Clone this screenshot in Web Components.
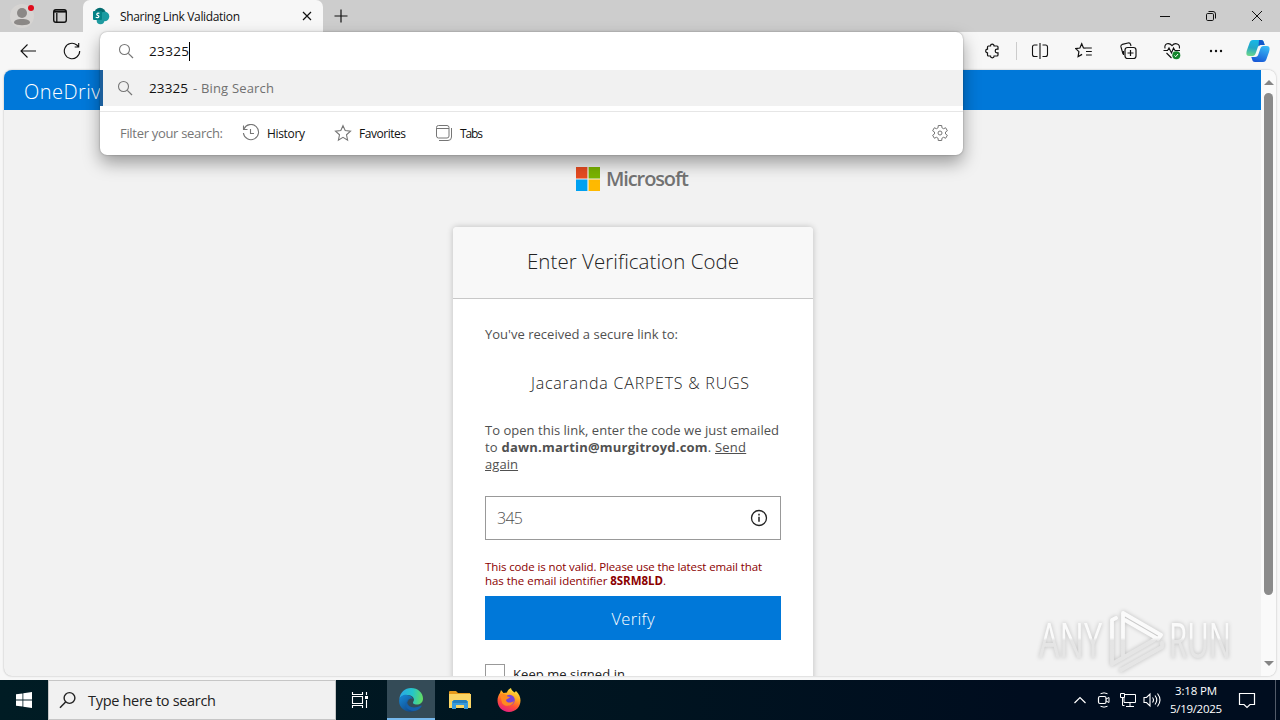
<!DOCTYPE html>
<html lang="en">
<head>
<meta charset="utf-8">
<title>Sharing Link Validation</title>
<style>
  html, body {
    margin: 0;
    width: 1280px;
    height: 720px;
    overflow: hidden;
    font-family: "Open Sans", "Noto Sans", sans-serif;
    font-size: 12px;
    color: #111;
  }
</style>
</head>
<body>
<desktop-screen></desktop-screen>

<script>
const makeTemplate = (html) => {
  const template = document.createElement('template')
  template.innerHTML = html
  return template
}

const define = (name, html) => {
  const template = makeTemplate(html)
  customElements.define(name, class extends HTMLElement {
    constructor() {
      super()
      this.attachShadow({ mode: 'open' })
      this.shadowRoot.appendChild(template.content.cloneNode(true))
    }
  })
}

// Outline of a six-toothed cog around (9, 9)
const cogPath = () => {
  const points = []
  for (let tooth = 0; tooth < 6; tooth += 1) {
    for (const [offset, radius] of [[-20, 5.6], [-13, 7.7], [13, 7.7], [20, 5.6]]) {
      const angle = (tooth * 60 - 90 + offset) * Math.PI / 180
      points.push(`${(9 + radius * Math.cos(angle)).toFixed(2)} ${(9 + radius * Math.sin(angle)).toFixed(2)}`)
    }
  }
  return `M${points.join('L')}Z`
}

// name: [width, height, markup]
const icons = {
  profile: [26, 26, '<circle cx="13" cy="13" r="12" fill="#d6d4d2" stroke="none"/><circle cx="13" cy="10" r="5" fill="#8b8886" stroke="none"/><path d="M5 20c0-3 3-4 8-4s8 1 8 4c-2 3-14 3-16 0Z" fill="#8b8886" stroke="none"/><circle cx="22" cy="5" r="3" fill="#e00b1c" stroke="none"/>'],
  workspaces: [16, 16, '<rect x="1.7" y="1.7" width="12.6" height="12.6" rx="2.2" stroke-width="1.4"/><path d="M2 3.6h12" stroke-width="2"/><path d="M4.8 5v9" stroke-width="1.3"/>'],
  sharepoint: [18, 18, '<g stroke="none"><circle cx="8" cy="6.5" r="5.8" fill="#036c70"/><circle cx="12.5" cy="9.5" r="4.8" fill="#1a9ba1"/><circle cx="8.5" cy="13.5" r="3.8" fill="#1f9aa0"/><rect x="1" y="4" width="9" height="9" rx="1" fill="#038387"/></g><path d="M7.4 6.4C5 5.4 3.8 7.7 5.7 8.4c2 .7 1.4 3-2 1.8" stroke="#fff" stroke-width="1.2"/>'],
  close: [12, 12, '<path d="m2 2 8 8M10 2l-8 8" stroke-width="1.2"/>'],
  plus: [14, 14, '<path d="M7 .5v13M.5 7h13" stroke-width="1.2"/>'],
  minimize: [12, 12, '<path d="M1 6.5h10"/>'],
  restore: [12, 12, '<rect x="1.5" y="3.5" width="7" height="7" rx="1.2"/><path d="M3.5 1.5H8a2.5 2.5 0 0 1 2.5 2.5v4.5"/>'],
  exit: [12, 12, '<path d="m1 1 10 10M11 1 1 11"/>'],
  back: [18, 18, '<path d="M17 9H2M8.500 2.500 2 9l6.500 6.500" stroke-width="1.1"/>'],
  refresh: [18, 18, '<path d="M16.700 9A7.700 7.700 0 1 1 13.800 3l1.700 1.700M15.700 1v4h-4" stroke-width="1.1"/>'],
  puzzle: [16, 16, '<path d="M4.500 3h2a1.800 1.800 0 0 1 3.600 0H13q1 0 1 1v2.200h-1a1.800 1.800 0 0 0 0 3.600h1V12q0 1-1 1h-2.900a1.800 1.800 0 0 1-3.600 0h-2q-1 0-1-1V9.800a1.800 1.800 0 0 1 0-3.600V4q0-1 1-1Z" stroke-width="1.2"/>'],
  split: [18, 18, '<path d="M9 1v16M6.500 3H3.500Q1.500 3 1.500 5v7.500q0 2 2 2h3M11.500 3h3q2 0 2 2v7.500q0 2-2 2h-3" stroke-width="1.1"/>'],
  favlist: [18, 18, '<path d="m10.500 6.200-2-.3L6.700 1.800 4.900 6 .8 6.600l3.100 3-.8 5 4-2.200M6.700 1.800 8.500 5.900M10 6h6.800M11 9.500h5.800M11 13h5.800" stroke-width="1.2"/>'],
  collections: [18, 18, '<path d="M4 12 2 5Q1.500 3 3.300 2.400L9 1q2-.5 2.600 1.500L12 4M4.500 13V9" stroke-width="1.1"/><rect x="6" y="5.500" width="11" height="11" rx="2.500" stroke-width="1.2"/><path d="M11.500 8v6M8.500 11h6" stroke-width="1.2"/>'],
  heart: [18, 18, '<path d="M2 6.500C1 1.500 6 0 9 3.700c3-3.700 8.500-2 7.300 2.800M.5 8.500h4L6 6l2.500 5 2-5 1.500 2.500h5M3.500 11l5 5" stroke-width="1.100"/><circle cx="13.300" cy="13.300" r="4" fill="#14852c" stroke="none"/><path d="m11.500 13.500 1.200 1.200 2.300-2.700" stroke="#fff"/>'],
  dots: [16, 16, '<g fill="currentColor" stroke="none"><circle cx="3" cy="8" r="1.200"/><circle cx="8" cy="8" r="1.200"/><circle cx="13" cy="8" r="1.200"/></g>'],
  copilot: [24, 24, '<defs><linearGradient id="a" x1=".5" y1="0" x2=".3" y2="1"><stop stop-color="#16b8e8"/><stop offset=".5" stop-color="#23a7c7"/><stop offset="1" stop-color="#6bd58a"/></linearGradient><linearGradient id="b" x1=".7" y1="0" x2=".3" y2="1"><stop stop-color="#37b9f5"/><stop offset="1" stop-color="#1757d6"/></linearGradient></defs><g stroke="none"><path d="M7 1h8c2 0 2.500 1 3 3l.700 2H15c-2 0-3 1-3.500 3l-1.700 5c-.700 2-1.500 3-3.300 3H3c-3 0-3-3-2-6L3.500 4C4.200 2 5 1 7 1Z" fill="url(#a)"/><path d="M17 23H9c-2 0-2.500-1-3-3l-.700-2H9c2 0 3-1 3.500-3l1.700-5c.700-2 1.500-3 3.300-3H21c3 0 3 3 2 6l-2.500 7c-.700 2-1.500 3-3.500 3Z" fill="url(#b)"/><path d="M13 1h2c2 0 2.500 1 3 3l.700 2H15c-1 0-2 .500-2.500 1.500Z" fill="#1456c9"/></g>'],
  search: [16, 16, '<circle cx="6.500" cy="6.500" r="5" stroke-width="1.100"/><path d="m10.300 10.300 4.700 4.700" stroke-width="1.200"/>'],
  history: [18, 18, '<path d="M2 5A7.600 7.600 0 1 1 1.400 9M1.500 1.500V5.500h4M8.500 5v4.500H12" stroke-width="1.100"/>'],
  star: [18, 18, '<path d="m9 1.700 2.200 4.900 5.300.6-4 3.600 1.100 5.300L9 13.400l-4.600 2.700 1.100-5.300-4-3.600 5.300-.6Z" stroke-width="1.100"/>'],
  tabs: [18, 18, '<rect x="1.500" y="1.500" width="12.500" height="12.500" rx="2"/><path d="M1.500 4.500H14M16.500 4v9q0 3.500-3.500 3.500H4"/>'],
  gear: [18, 18, `<path d="${cogPath()}" stroke-linejoin="round"/><circle cx="9" cy="9" r="2"/>`],
  microsoft: [24, 24, '<g stroke="none"><path d="M0 0h11.400v11.400H0z" fill="#e74c22"/><path d="M12.600 0H24v11.400H12.600z" fill="#7bb400"/><path d="M0 12.600h11.400V24H0z" fill="#00a1f1"/><path d="M12.600 12.600H24V24H12.600z" fill="#ffb900"/></g>'],
  info: [18, 18, '<circle cx="9" cy="9" r="7.500" stroke-width="1.300"/><path d="M9 7.800v5M9 4.800v1.600" stroke-width="1.500"/>'],
  windows: [16, 16, '<path d="M0 2.300 6.500 1.400v6.200H0zM7.300 1.300 16 0v7.600H7.300zM0 8.400h6.500v6.200L0 13.700zM7.300 8.400H16V16l-8.700-1.300z" fill="#fff" stroke="none"/>'],
  find: [18, 18, '<circle cx="10.500" cy="7" r="5.400" stroke-width="1.400"/><path d="M6.600 11 1 16.700" stroke-width="1.500"/>'],
  taskview: [18, 18, '<path d="M1.500 1v2.500h10V1M1.500 17v-2.500h10V17M1.500 5.500h10v7h-10zM15.500 1v3M15.500 9v8" stroke-width="1.100"/><path d="M14 5h3v3h-3z" fill="currentColor" stroke="none"/>'],
  edge: [24, 24, '<defs><linearGradient id="g" x1="0" y1=".3" x2="1" y2=".4"><stop stop-color="#2aa7e8"/><stop offset=".55" stop-color="#25c5c9"/><stop offset="1" stop-color="#62dc63"/></linearGradient><linearGradient id="h" y2="1" x2=".7"><stop stop-color="#1689d8"/><stop offset="1" stop-color="#114a8b"/></linearGradient></defs><g stroke="none"><path d="M.400 11C1 4.500 6 0 12 0c7 0 12 5 12 10.500 0 4-3 6-6 6-3.500 0-4.500-1.500-3.800-2.600C17 10 12 6.500 8 7 4 7.200 1.500 9 .400 11Z" fill="url(#g)"/><path d="M.200 12C.700 8.500 4.500 6.500 8 6.900c3 .3 5 2 6 4-3-1.500-6 1-6 4.600 0 4 3.500 7.500 8 7.300C8.500 26-.800 20.500.200 12Z" fill="url(#h)"/><path d="M8.200 14c0 4.500 6 7.500 13.300 3.800 1-.5 1.500 0 .8 1C19 24 11 24.500 7.500 19.500c-1.500-2.200-.900-6.500 3-8.700Z" fill="#1460ac"/></g>'],
  folder: [24, 20, '<g stroke="none"><path d="M1 2q0-1 1-1h6l2 2h12v5H1z" fill="#e69a1c"/><path d="M1 4h22v14H1z" fill="#fbd565"/><path d="M4 11h16v8h-4v-4H8v4H4z" fill="#3a9bdc"/><path d="M5 13h14v-2q0-1-1-1H6q-1 0-1 1z" fill="#2780bf"/></g>'],
  firefox: [24, 24, '<defs><linearGradient id="f" x1=".8" y1="0" x2=".4" y2="1"><stop stop-color="#fff04a"/><stop offset=".4" stop-color="#ffa51f"/><stop offset=".7" stop-color="#ff5036"/><stop offset="1" stop-color="#e8207d"/></linearGradient></defs><g stroke="none"><path d="M3 5 4 2l2.500 3L10 4.500C10.500 2.500 12 1 14 0c0 2 2 3.200 3.500 4.500L19 3c3 3 4.500 6 4.500 9.500C23.500 19 18.500 24 12 24S.500 19 .500 12.500C.500 9.500 1.500 7 3 5Z" fill="url(#f)"/><circle cx="12.500" cy="12" r="5.300" fill="#7844d8"/><path d="M3 6c3-1 6 .3 7.500 2.500L13 9c-1 2-3.500 1.500-4 3.300.500 2.500 4.500 3.300 8 .700-1.500 5.500-9 6.500-12 2Z" fill="#ff8a20"/></g>'],
  up: [14, 14, '<path d="m1.500 10 5.500-5.500 5.500 5.500" stroke-width="1.200"/>'],
  meet: [16, 18, '<rect x="2.500" y="5.500" width="7.500" height="7" rx="1.500" stroke-width="1.200"/><path d="m10 8 3-1.500v5L10 10M4.500 2.700q3.500-1.700 7 0M4.500 15.300q3.500 1.700 7 0"/>'],
  network: [18, 16, '<path d="M6 2.500h10.500v8H5v-5M11 11v3.500M7 14.500h8M1.500 1.500h4v4h-4zM3.500 6v7.500h2"/>'],
  volume: [18, 16, '<path d="M1 5.500h2.500L7 2v12l-3.500-3.500H1zM9.500 5.500q2 2.500 0 5M12 3.500q3.500 4.500 0 9M14.500 1.500q5 6.500 0 13" stroke-width="1.100"/>'],
  action: [18, 18, '<path d="M1.500 2.500h15v11h-4.500L9 16.500l-3-3H1.500z" stroke-width="1.200"/>']
}

customElements.define('line-icon', class extends HTMLElement {
  connectedCallback() {
    if (this.shadowRoot) return
    const [w, h, body] = icons[this.getAttribute('name')]
    this.attachShadow({ mode: 'open' }).innerHTML = `
      <style>
        :host { display: inline-flex; flex: none; justify-content: center; align-items: center; }
        svg { display: block; fill: none; stroke: currentColor; flex: none; }
      </style>
      <svg width="${w}" height="${h}" viewBox="0 0 ${w} ${h}">${body}</svg>`
  }
})

// One line of text, tracked in or out until it fills the given width.
customElements.define('fit-text', class extends HTMLElement {
  connectedCallback() {
    if (this.shadowRoot) return
    this.attachShadow({ mode: 'open' }).innerHTML = `
      <style>
        :host { display: inline-block; flex: none; width: max-content; white-space: nowrap; }
      </style>
      <slot></slot>`
    const width = Number(this.getAttribute('width'))
    const natural = this.getBoundingClientRect().width
    const count = this.textContent.length
    if (natural && count > 1) {
      this.style.letterSpacing = `${(width - natural) / (count - 1)}px`
      this.style.width = `${width}px`
    }
  }
})

define('tab-strip', `
  <style>
    :host { display: flex; height: 32px; background: #cdcdcd; align-items: center; box-sizing: border-box; }
    .profile { width: 44px; }
    .spaces { width: 32px; }
    .tab { display: flex; align-items: center; align-self: stretch; box-sizing: border-box; width: 240px; margin-left: 7px; padding: 0 10px 0 9px; background: #f7f7f7; border-radius: 7px 7px 0 0; }
    .tab fit-text { margin: 0 auto 0 10px; }
    .plus { width: 35px; }
    .controls { display: flex; margin-left: auto; }
    .controls line-icon { width: 46px; }
  </style>
  <line-icon class="profile" name="profile"></line-icon>
  <line-icon class="spaces" name="workspaces"></line-icon>
  <div class="tab">
    <line-icon name="sharepoint"></line-icon>
    <fit-text width="120">Sharing Link Validation</fit-text>
    <line-icon name="close"></line-icon>
  </div>
  <line-icon class="plus" name="plus"></line-icon>
  <div class="controls">
    <line-icon name="minimize"></line-icon>
    <line-icon name="restore"></line-icon>
    <line-icon name="exit"></line-icon>
  </div>
`)

define('tool-bar', `
  <style>
    :host { display: flex; height: 38px; align-items: center; background: #f7f7f7; box-sizing: border-box; padding-left: 6px; }
    line-icon { width: 44px; }
    .right { display: flex; align-items: center; margin-left: auto; }
    .rule { width: 1px; height: 18px; background: #ccc; margin: 0 1px 0 2px; }
    .copilot { width: 40px; margin-right: 2px; }
  </style>
  <line-icon name="back"></line-icon>
  <line-icon name="refresh"></line-icon>
  <div class="right">
    <line-icon name="puzzle"></line-icon>
    <div class="rule"></div>
    <line-icon name="split"></line-icon>
    <line-icon name="favlist"></line-icon>
    <line-icon name="collections"></line-icon>
    <line-icon name="heart"></line-icon>
    <line-icon name="dots"></line-icon>
    <line-icon class="copilot" name="copilot"></line-icon>
  </div>
`)

define('search-popup', `
  <style>
    :host { display: block; box-sizing: border-box; width: 863px; height: 123px; background: #fff; border-radius: 7px; box-shadow: 0 0 2px rgba(0,0,0,.35), 0 8px 17px rgba(0,0,0,.36); overflow: hidden; font-size: 13.500px; color: #111; }
    .row { display: flex; align-items: center; box-sizing: border-box; }
    .row line-icon { color: #767676; }
    .query { height: 38px; padding-left: 18px; }
    .query fit-text { margin-left: 15px; }
    .caret { width: 1px; height: 19px; background: #000; margin-left: 0; }
    .hit { height: 36px; background: #f1f1f1; border-left: 3px solid #1c5f9c; padding-left: 14px; }
    .hit fit-text { margin-left: 16px; }
    .hit .engine { margin-left: 5px; color: #707070; font-size: 13px; }
    .filters { height: 43px; margin-top: 5px; border-top: 1px solid #e6e6e6; padding: 0 14px 0 20px; color: #767676; font-size: 13px; }
    .chip { display: flex; align-items: center; gap: 7px; color: #111; font-size: 12px; }
    .gear { margin-left: auto; }
  </style>
  <div class="row query">
    <line-icon name="search"></line-icon>
    <fit-text width="40">23325</fit-text><span class="caret"></span>
  </div>
  <div class="row hit">
    <line-icon name="search"></line-icon>
    <fit-text width="39">23325</fit-text>
    <fit-text class="engine" width="81">- Bing Search</fit-text>
  </div>
  <div class="row filters">
    <fit-text width="103">Filter your search:</fit-text>
    <div class="chip" style="margin-left:19px"><line-icon name="history"></line-icon><fit-text width="38">History</fit-text></div>
    <div class="chip" style="margin-left:29px"><line-icon name="star"></line-icon><fit-text width="47">Favorites</fit-text></div>
    <div class="chip" style="margin-left:29px"><line-icon name="tabs"></line-icon><fit-text width="23">Tabs</fit-text></div>
    <line-icon class="gear" name="gear"></line-icon>
  </div>
`)

define('verify-card', `
  <style>
    :host { display: flex; flex-direction: column; width: 360px; flex: none; background: #fff; border-radius: 4px 4px 0 0; box-shadow: 0 0 6px rgba(0,0,0,.22); overflow: hidden; font-size: 13px; color: #505050; }
    header { display: flex; justify-content: center; align-items: center; box-sizing: border-box; height: 72px; padding-bottom: 4px; background: #f8f8f8; border-bottom: 1px solid #c8c8c8; color: #222; font-size: 20.500px; font-weight: 350; }
    main { display: flex; flex-direction: column; padding: 27px 32px 0; line-height: 17px; }
    .resource { align-self: center; margin: 28px 0 27px 14px; font-size: 16px; line-height: 24px; color: #222; font-weight: 350; }
    .field { display: flex; align-items: center; justify-content: space-between; box-sizing: border-box; height: 44px; margin-top: 23px; padding: 0 12px 0 11px; border: 1px solid #999; font-size: 16px; font-weight: 300; color: #505050; }
    .field line-icon { color: #222; }
    .error { display: flex; flex-direction: column; margin: 20px 0 8px; color: #8b0000; font-size: 11.500px; line-height: 14px; }
    button { height: 44px; border: 0; padding: 0; background: #0078d9; color: #fff; font: 350 16.500px "Open Sans", "Noto Sans", sans-serif; }
    label { display: flex; gap: 8px; margin-top: 24px; color: #222; line-height: 20px; }
    .box { box-sizing: border-box; width: 20px; height: 20px; border: 1px solid #999; }
  </style>
  <header><fit-text width="212">Enter Verification Code</fit-text></header>
  <main>
    <fit-text width="193">You've received a secure link to:</fit-text>
    <fit-text class="resource" width="218">Jacaranda CARPETS &amp; RUGS</fit-text>
    <fit-text width="294">To open this link, enter the code we just emailed</fit-text>
    <fit-text width="261">to <b>dawn.martin@murgitroyd.com</b>. <u>Send</u></fit-text>
    <fit-text width="33"><u>again</u></fit-text>
    <div class="field"><fit-text width="26">345</fit-text><line-icon name="info"></line-icon></div>
    <div class="error">
      <fit-text width="277">This code is not valid. Please use the latest email that</fit-text>
      <fit-text width="181">has the email identifier <b>8SRM8LD</b>.</fit-text>
    </div>
    <button><fit-text width="43">Verify</fit-text></button>
    <label><span class="box"></span><fit-text width="112">Keep me signed in</fit-text></label>
  </main>
`)

define('scroll-bar', `
  <style>
    :host { display: flex; flex-direction: column; align-items: center; box-sizing: border-box; width: 15px; padding: 10px 0; background: #fafafa; }
    i { border: 5px solid transparent; }
    .up { border-top: 0; border-bottom: 5px solid #858585; }
    .down { border-bottom: 0; border-top: 5px solid #858585; margin-top: auto; }
    .thumb { width: 9px; height: 502px; margin-top: 8px; border-radius: 5px; background: #8b8b8b; }
  </style>
  <i class="up"></i><div class="thumb"></div><i class="down"></i>
`)

define('web-page', `
  <style>
    :host { display: flex; height: 606px; margin: 0 4px; background: #f2f2f2; border-radius: 8px; overflow: hidden; box-shadow: 0 0 2px rgba(0,0,0,.3); }
    .document { display: flex; flex-direction: column; flex: 1; align-items: center; min-width: 0; overflow: hidden; }
    .suite { display: flex; align-items: center; align-self: stretch; flex: none; box-sizing: border-box; height: 40px; padding: 3px 20px 0; background: #0078d9; color: #fff; font-size: 20px; font-weight: 350; }
    .logo { display: flex; align-items: center; gap: 6px; height: 24px; margin: 57px 0 36px; font-size: 20px; font-weight: 600; color: #737373; line-height: 24px; }
    .logo, verify-card { flex: none; }
    verify-card { margin-left: 1px; height: 500px; }
  </style>
  <div class="document">
    <div class="suite"><fit-text width="88">OneDrive</fit-text></div>
    <div class="logo"><line-icon name="microsoft"></line-icon><fit-text width="83">Microsoft</fit-text></div>
    <verify-card></verify-card>
  </div>
  <scroll-bar></scroll-bar>
`)

define('task-bar', `
  <style>
    :host { display: flex; height: 40px; background: linear-gradient(90deg, #001c24, #001420 50%, #000d1f 80%); color: #fff; align-items: stretch; }
    line-icon { width: 49px; }
    .start { width: 48px; }
    .search { display: flex; align-items: center; box-sizing: border-box; width: 288px; border: 1px solid #c6c6c6; background: #f1f1f1; color: #222; padding-left: 10px; font-size: 14.500px; }
    .search line-icon { width: 18px; margin-right: 11px; }
    .edge { width: 48px; margin-left: 4px; background: #344b57; box-shadow: inset 0 -2px #76b9ed; }
    .taskview { width: 47px; }
    .tray { display: flex; align-items: center; margin-left: auto; }
    .tray line-icon { width: 24px; }
    .clock { display: flex; flex-direction: column; align-items: center; width: 64px; line-height: 18px; font-size: 11.500px; padding-bottom: 1px; }
    .tray .action { width: 38px; margin-right: 9px; }
    .peek { width: 1px; align-self: stretch; background: #525b69; margin-right: 4px; }
  </style>
  <line-icon class="start" name="windows"></line-icon>
  <div class="search"><line-icon name="find"></line-icon><fit-text width="128">Type here to search</fit-text></div>
  <line-icon class="taskview" name="taskview"></line-icon>
  <line-icon class="edge" name="edge"></line-icon>
  <line-icon name="folder"></line-icon>
  <line-icon name="firefox"></line-icon>
  <div class="tray">
    <line-icon name="up"></line-icon>
    <line-icon name="meet"></line-icon>
    <line-icon name="network"></line-icon>
    <line-icon name="volume"></line-icon>
    <div class="clock"><fit-text width="42">3:18 PM</fit-text><fit-text width="52">5/19/2025</fit-text></div>
    <line-icon class="action" name="action"></line-icon>
    <span class="peek"></span>
  </div>
`)

define('run-watermark', `
  <style>
    :host { display: block; }
    svg { display: block; overflow: visible; filter: drop-shadow(0 0 2px rgba(0,0,0,.22)); }
    text { font: 500 49px "Open Sans", sans-serif; fill: url(#fade); }
    path { fill: none; stroke: url(#fade); stroke-width: 3.800; stroke-linejoin: round; stroke-linecap: round; }
  </style>
  <svg width="200" height="64" viewBox="0 0 200 64">
    <defs><linearGradient id="fade" gradientUnits="userSpaceOnUse" x1="0" y1="0" x2="0" y2="64"><stop offset=".45" stop-color="#fafafa"/><stop offset=".49" stop-color="#e5e5e5"/></linearGradient></defs>
    <text x="2" y="49" textLength="63" lengthAdjust="spacingAndGlyphs">ANY</text>
    <text x="132" y="49" textLength="62" lengthAdjust="spacingAndGlyphs">RUN</text>
    <path d="M79 9 75 11V55L117 31M86 49V4L124 26 121 30 88 11M84 61 125 38V34"/>
  </svg>
`)

define('desktop-screen', `
  <style>
    :host { display: flex; flex-direction: column; position: relative; width: 1280px; height: 720px; background: #f7f7f7; overflow: hidden; }
    task-bar { margin-top: auto; }
    search-popup { position: absolute; left: 100px; top: 32px; }
    run-watermark { position: absolute; left: 1037px; top: 609px; }
  </style>
  <tab-strip></tab-strip>
  <tool-bar></tool-bar>
  <web-page></web-page>
  <task-bar></task-bar>
  <search-popup></search-popup>
  <run-watermark></run-watermark>
`)
</script>
</body>
</html>
